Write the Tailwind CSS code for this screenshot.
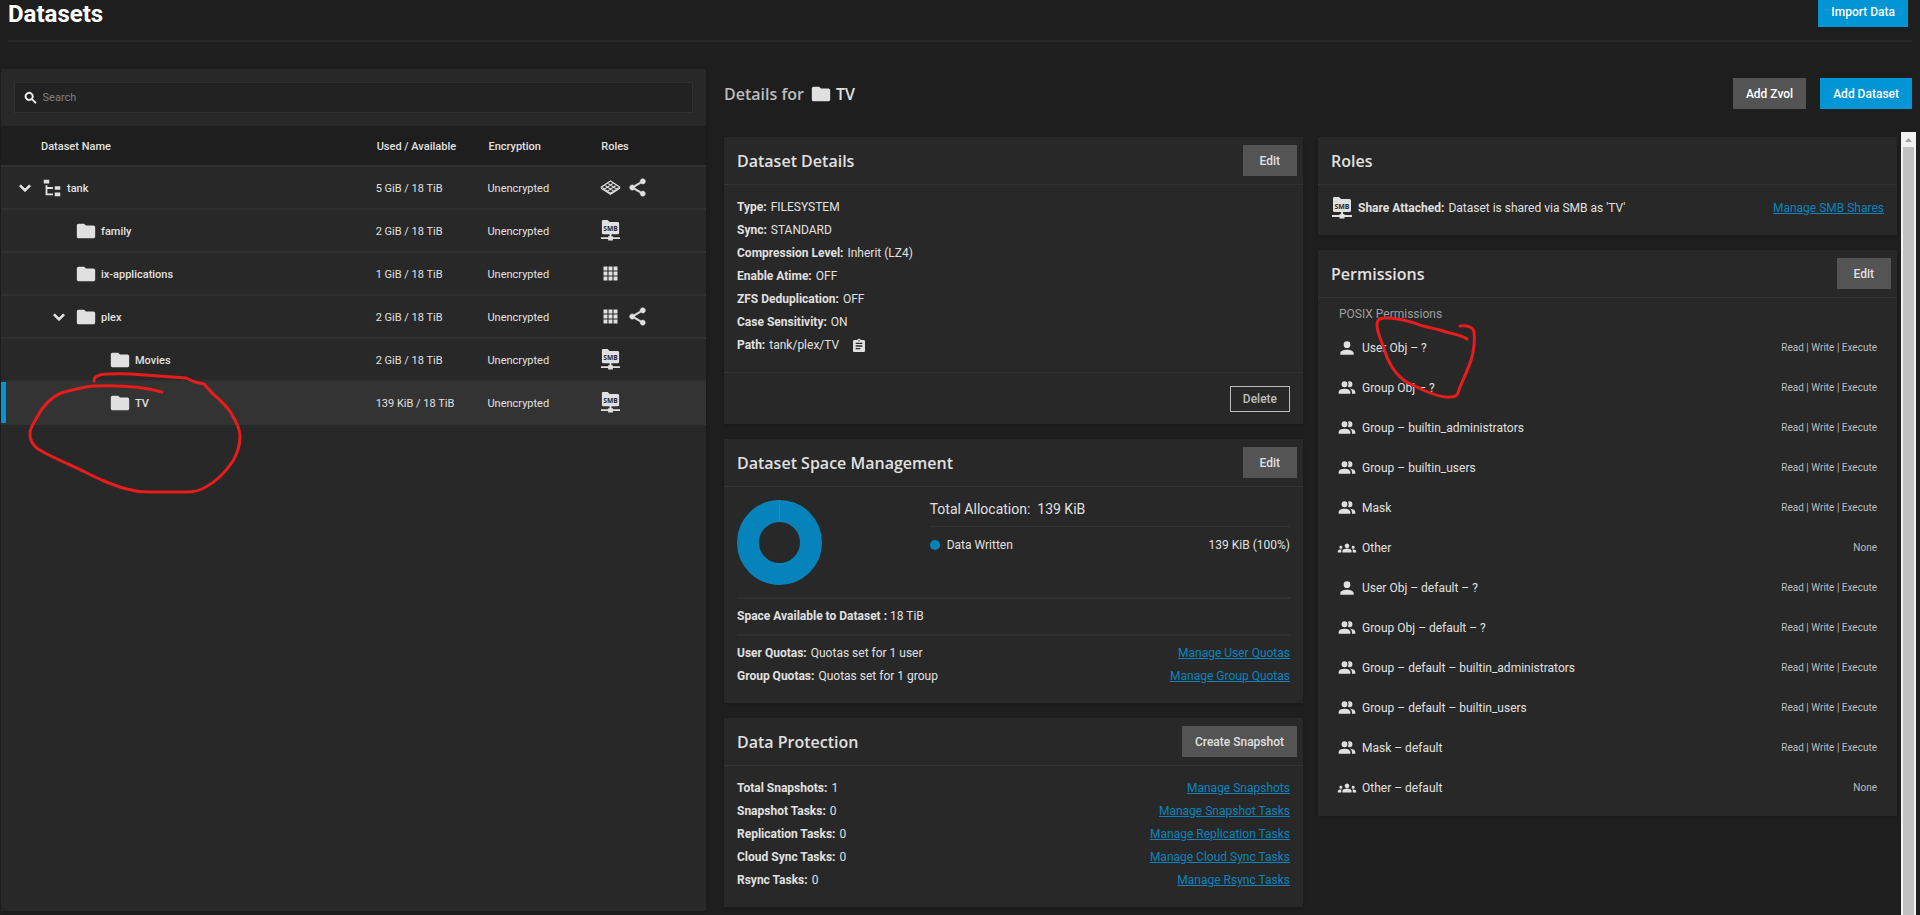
<!DOCTYPE html>
<html lang="en">
<head>
    <meta charset="UTF-8">
    <meta name="viewport" content="width=device-width, initial-scale=1.0">
    <title>Datasets</title>
    <script src="https://cdn.jsdelivr.net/npm/@tailwindcss/browser@4"></script>
</head>
<body class="relative flex min-h-screen flex-col overflow-x-hidden bg-[#1e1e1e] font-['Roboto',sans-serif] text-xs text-[#e0e0e0]">
    <!-- Icon sprite -->
    <svg class="hidden" aria-hidden="true">
        <symbol id="folder" viewBox="0 0 24 24"><path d="M10 4H4c-1.1 0-2 .9-2 2v12c0 1.1.9 2 2 2h16c1.1 0 2-.9 2-2V8c0-1.1-.9-2-2-2h-8z"/></symbol>
        <symbol id="tree" viewBox="0 0 24 24"><path d="M3 3H9V7H3V3M15 10H21V14H15V10M15 17H21V21H15V17M13 13H7V18H13V20H5V9H7V11H13V13Z"/></symbol>
        <symbol id="chevron" viewBox="0 0 24 24"><path d="M7.41 8.58L12 13.17L16.59 8.58L18 10L12 16L6 10Z" stroke="currentColor"/></symbol>
        <symbol id="apps" viewBox="0 0 24 24"><path d="M4 4h4.500v4.500H4zM9.750 4h4.500v4.500h-4.500zM15.500 4H20v4.500h-4.500zM4 9.750h4.500v4.500H4zM9.750 9.750h4.500v4.500h-4.500zM15.500 9.750H20v4.500h-4.500zM4 15.500h4.500V20H4zM9.750 15.500h4.500V20h-4.500zM15.500 15.500H20V20h-4.500z"/></symbol>
        <symbol id="share" viewBox="0 0 24 24"><path d="M18 16.080c-.76 0-1.440.3-1.960.77L8.910 12.700c.05-.23.09-.46.09-.7s-.04-.47-.09-.7l7.050-4.110c.54.5 1.250.81 2.040.81 1.660 0 3-1.340 3-3s-1.340-3-3-3-3 1.340-3 3c0 .24.04.47.09.7L8.040 9.810C7.500 9.310 6.790 9 6 9c-1.660 0-3 1.340-3 3s1.340 3 3 3c.79 0 1.500-.31 2.040-.81l7.120 4.160c-.05.21-.08.43-.08.65 0 1.610 1.310 2.920 2.920 2.920s2.920-1.310 2.920-2.920-1.310-2.920-2.920-2.920z" stroke="currentColor" stroke-width=".6"/></symbol>
        <symbol id="smb" viewBox="0 0 22 22">
            <path d="M3 0H8L10 2H18.500Q20 2 20 3.500V13.500Q20 15 18.500 15H12V17H13.500V18H21V20H13.500V21.500H8.500V20H1V18H8.500V17H10V15H3.500Q2 15 2 13.500V1.500Q2 0 3 0Z"/>
            <text x="11" y="11.500" text-anchor="middle" font-size="7" font-weight="700" fill="#282828" font-family="Open Sans, sans-serif">SMB</text>
        </symbol>
        <symbol id="pool" viewBox="0 0 24 18">
            <path d="M12 1.500L22.500 8.500L12 15.500L1.500 8.500ZM5 6.170L15.500 13.170M8.500 3.830L19 10.830M19 6.170L8.500 13.170M15.500 3.830L5 10.830" fill="none" stroke="currentColor" stroke-width="1.300"/>
            <path d="M1 9V10.500L12 17.500L23 10.500V9L12 15.500Z"/>
        </symbol>
        <symbol id="user" viewBox="0 0 24 24"><path d="M12 4A4 4 0 0 1 16 8A4 4 0 0 1 12 12A4 4 0 0 1 8 8A4 4 0 0 1 12 4M12 14C16.420 14 20 15.790 20 18V20H4V18C4 15.790 7.580 14 12 14Z"/></symbol>
        <symbol id="group" viewBox="0 0 24 24"><path d="M16 17V19H2V17S2 13 9 13 16 17 16 17M12.500 7.500A3.500 3.500 0 1 0 9 11A3.500 3.500 0 0 0 12.500 7.500M15.940 13A5.320 5.320 0 0 1 18 17V19H22V17S22 13.370 15.940 13M15 4A3.390 3.390 0 0 0 13.070 4.590A5 5 0 0 1 13.070 10.410A3.390 3.390 0 0 0 15 11A3.500 3.500 0 0 0 15 4Z"/></symbol>
        <symbol id="other" viewBox="-1 -1 26 26"><path d="M12 12.750c1.630 0 3.070.39 4.240.9 1.080.48 1.760 1.560 1.760 2.730V18H6v-1.610c0-1.180.68-2.260 1.760-2.730 1.170-.52 2.610-.91 4.240-.91zM4 13c1.100 0 2-.9 2-2s-.9-2-2-2-2 .9-2 2 .9 2 2 2zm1.130 1.100c-.37-.06-.74-.1-1.130-.1-.99 0-1.930.21-2.780.58C.48 14.900 0 15.620 0 16.430V18h4.500v-1.610c0-.83.23-1.610.63-2.290zM20 13c1.100 0 2-.9 2-2s-.9-2-2-2-2 .9-2 2 .9 2 2 2zm4 3.430c0-.81-.48-1.530-1.220-1.850-.85-.37-1.790-.58-2.780-.58-.39 0-.76.04-1.130.1.4.68.63 1.460.63 2.290V18H24v-1.570zM12 6c1.660 0 3 1.340 3 3s-1.340 3-3 3-3-1.340-3-3 1.340-3 3-3z"/></symbol>
        <symbol id="clipboard" viewBox="0 0 24 24"><path d="M19 3h-4.180C14.400 1.840 13.300 1 12 1s-2.400.84-2.820 2H5c-1.100 0-2 .9-2 2v14c0 1.100.9 2 2 2h14c1.100 0 2-.9 2-2V5c0-1.100-.9-2-2-2zm-7 0c.55 0 1 .45 1 1s-.45 1-1 1-1-.45-1-1 .45-1 1-1zm2 14H7v-2h7v2zm3-4H7v-2h10v2zm0-4H7V7h10v2z"/></symbol>
        <symbol id="search" viewBox="0 0 24 24"><path d="M15.500 14h-.79l-.28-.27C15.410 12.590 16 11.110 16 9.500 16 5.910 13.090 3 9.500 3S3 5.910 3 9.500 5.910 16 9.500 16c1.610 0 3.090-.59 4.230-1.570l.27.28v.79l5 4.990L20.490 19l-4.990-5zm-6 0C7.010 14 5 11.990 5 9.500S7.010 5 9.500 5 14 7.010 14 9.500 11.990 14 9.500 14z" stroke="currentColor"/></symbol>
    </svg>

    <!-- Page header -->
    <header class="mx-2 flex h-[42px] items-start justify-between border-b-2 border-[#282828] pr-1">
        <h1 class="text-2xl leading-7 font-bold text-white">Datasets</h1>
        <button class="h-[27px] bg-[#0095d5] px-[13px] pb-1 font-medium text-white">Import Data</button>
    </header>

    <main class="mt-[27px] grid grow grid-cols-[705fr_1196fr] gap-x-[18px] pl-px">
        <!-- Dataset tree -->
        <section class="mb-1 bg-[#282828] shadow">
            <div class="h-[57px] px-[13px] pt-[13px]">
                <label class="flex h-[31px] items-center gap-1 border border-[#303030] bg-[#222222] pl-2 text-white">
                    <svg class="size-4 fill-current"><use href="#search"/></svg>
                    <input type="text" aria-label="Search" placeholder="Search" class="w-full bg-transparent pt-[2px] text-[11px] outline-none placeholder:text-[#808080]">
                </label>
            </div>
            <table class="w-full table-fixed text-left text-[11px]">
                <colgroup><col class="w-[53%]"><col class="w-[16%]"><col class="w-[16%]"><col></colgroup>
                <thead class="bg-[#1e1e1e]">
                    <tr class="h-10 border-b-2 border-[#303030]">
                        <th class="pt-[3px] pl-10 font-medium">Dataset Name</th>
                        <th class="pt-[3px] pl-[2px] font-medium">Used / Available</th>
                        <th class="pt-[3px] pl-px font-medium">Encryption</th>
                        <th class="pt-[3px] pl-px font-medium">Roles</th>
                    </tr>
                </thead>
                <tbody id="rows"></tbody>
            </table>
        </section>

        <!-- Details panel -->
        <section class="flex flex-col">
            <div class="mt-[9px] flex h-[31px] items-center justify-between pr-2">
                <h2 class="flex items-center font-['Open_Sans',sans-serif] text-base font-semibold text-[#bdbdbd]">Details for <svg class="mr-1 ml-[6px] size-[22px] fill-[#e0e0e0]"><use href="#folder"/></svg><span class="text-[#e0e0e0]">TV</span></h2>
                <div class="flex gap-[14px] font-medium text-white">
                    <button class="h-[31px] bg-[#545454] px-[13px]">Add Zvol</button>
                    <button class="h-[31px] bg-[#0095d5] px-[13px]">Add Dataset</button>
                </div>
            </div>

            <div class="mt-[23px] flex grow pr-1">
                <div class="mt-[5px] grid grow grid-cols-2 items-start gap-[15px] pr-1">
                    <div class="flex flex-col gap-[15px]">
                        <article class="bg-[#282828] shadow">
                            <header class="flex h-12 items-center justify-between border-b border-[#333333] pr-[6px] pl-[13px]">
                                <h3 class="font-['Open_Sans',sans-serif] text-base font-semibold">Dataset Details</h3>
                                <button class="h-[31px] bg-[#545454] px-[17px] font-medium">Edit</button>
                            </header>
                            <dl class="px-[13px] pt-[11px] pb-[15px] leading-[23px]">
                                <div class="flex gap-1"><dt class="font-bold">Type:</dt><dd>FILESYSTEM</dd></div>
                                <div class="flex gap-1"><dt class="font-bold">Sync:</dt><dd>STANDARD</dd></div>
                                <div class="flex gap-1"><dt class="font-bold">Compression Level:</dt><dd>Inherit (LZ4)</dd></div>
                                <div class="flex gap-1"><dt class="font-bold">Enable Atime:</dt><dd>OFF</dd></div>
                                <div class="flex gap-1"><dt class="font-bold">ZFS Deduplication:</dt><dd>OFF</dd></div>
                                <div class="flex gap-1"><dt class="font-bold">Case Sensitivity:</dt><dd>ON</dd></div>
                                <div class="flex gap-1"><dt class="font-bold">Path:</dt><dd class="flex items-center gap-3">tank/plex/TV <button aria-label="Copy path"><svg class="size-4 fill-current"><use href="#clipboard"/></svg></button></dd></div>
                            </dl>
                            <footer class="flex h-[52px] items-center justify-end border-t border-[#333333] pr-[13px]">
                                <button class="h-[26px] border border-[#bdbdbd] px-3 font-medium text-[#bdbdbd]">Delete</button>
                            </footer>
                        </article>

                        <article class="bg-[#282828] shadow">
                            <header class="flex h-12 items-center justify-between border-b border-[#333333] pr-[6px] pl-[13px]">
                                <h3 class="font-['Open_Sans',sans-serif] text-base font-semibold">Dataset Space Management</h3>
                                <button class="h-[31px] bg-[#545454] px-[17px] font-medium">Edit</button>
                            </header>
                            <div class="px-[13px] pb-[15px]">
                                <div class="grid h-[112px] grid-cols-[193fr_361fr] border-b-2 border-[#303030] pt-[13px]">
                                    <svg class="size-[85px]" viewBox="0 0 85 85" role="img" aria-label="Space usage">
                                        <circle cx="42.5" cy="42.5" r="31.5" fill="none" stroke="#0683bb" stroke-width="22"/>
                                        <path d="M42.500 0V22" stroke="#0a90cc"/>
                                    </svg>
                                    <div>
                                        <p class="h-[27px] border-b border-[#333333] text-sm leading-[18px]">Total Allocation:&nbsp; 139 KiB</p>
                                        <p class="flex h-9 items-center gap-[7px]"><span class="size-[10px] rounded-full bg-[#0683bb]"></span>Data Written<span class="ml-auto">139 KiB (100%)</span></p>
                                    </div>
                                </div>
                                <p class="h-[37px] border-b-2 border-[#303030] leading-[35px]"><b>Space Available to Dataset :</b> 18 TiB</p>
                                <div class="pt-[6px] leading-[23px]">
                                    <p class="flex gap-1"><b>User Quotas:</b> Quotas set for 1 user <a href="#" class="ml-auto text-[#0a84bd] underline">Manage User Quotas</a></p>
                                    <p class="flex gap-1"><b>Group Quotas:</b> Quotas set for 1 group <a href="#" class="ml-auto text-[#0a84bd] underline">Manage Group Quotas</a></p>
                                </div>
                            </div>
                        </article>

                        <article class="bg-[#282828] shadow">
                            <header class="flex h-12 items-center justify-between border-b border-[#333333] pr-[6px] pl-[13px]">
                                <h3 class="font-['Open_Sans',sans-serif] text-base font-semibold">Data Protection</h3>
                                <button class="h-[31px] bg-[#545454] px-[13px] font-medium">Create Snapshot</button>
                            </header>
                            <div class="px-[13px] pt-[11px] pb-[15px] leading-[23px]">
                                <p class="flex gap-1"><b>Total Snapshots:</b> 1 <a href="#" class="ml-auto text-[#0a84bd] underline">Manage Snapshots</a></p>
                                <p class="flex gap-1"><b>Snapshot Tasks:</b> 0 <a href="#" class="ml-auto text-[#0a84bd] underline">Manage Snapshot Tasks</a></p>
                                <p class="flex gap-1"><b>Replication Tasks:</b> 0 <a href="#" class="ml-auto text-[#0a84bd] underline">Manage Replication Tasks</a></p>
                                <p class="flex gap-1"><b>Cloud Sync Tasks:</b> 0 <a href="#" class="ml-auto text-[#0a84bd] underline">Manage Cloud Sync Tasks</a></p>
                                <p class="flex gap-1"><b>Rsync Tasks:</b> 0 <a href="#" class="ml-auto text-[#0a84bd] underline">Manage Rsync Tasks</a></p>
                            </div>
                        </article>
                    </div>

                    <div class="flex flex-col gap-[15px]">
                        <article class="bg-[#282828] shadow">
                            <header class="flex h-12 items-center border-b border-[#333333] pl-[13px]">
                                <h3 class="font-['Open_Sans',sans-serif] text-base font-semibold">Roles</h3>
                            </header>
                            <p class="flex h-[50px] items-center gap-1 px-[13px] pb-1"><svg class="mr-px size-[22px] fill-current"><use href="#smb"/></svg><b>Share Attached:</b> Dataset is shared via SMB as 'TV' <a href="#" class="ml-auto text-[#0a84bd] underline">Manage SMB Shares</a></p>
                        </article>

                        <article class="bg-[#282828] pb-2 shadow">
                            <header class="flex h-12 items-center justify-between border-b border-[#333333] pr-[6px] pl-[13px]">
                                <h3 class="font-['Open_Sans',sans-serif] text-base font-semibold">Permissions</h3>
                                <button class="h-[31px] bg-[#545454] px-[17px] font-medium">Edit</button>
                            </header>
                            <h4 class="h-[30px] px-[21px] pt-2 text-[#9e9e9e]">POSIX Permissions</h4>
                            <ul id="permissions" class="pr-5 pl-[19px]"></ul>
                        </article>
                    </div>
                </div>

                <!-- Scrollbar -->
                <div class="flex w-[15px] flex-col items-center bg-[#f1f1f1]" aria-hidden="true">
                    <svg class="h-[15px] w-[15px]" viewBox="0 0 15 15"><path d="M4 10L7.500 6L11 10Z" fill="#a3a3a3"/></svg>
                    <div class="w-[11px] grow bg-[#c1c1c1]"></div>
                </div>
            </div>
        </section>
    </main>

    <!-- Pen marks over the page -->
    <svg class="pointer-events-none absolute top-0 left-0 h-[915px] w-[1920px]" viewBox="0 0 1920 915" fill="none" stroke="#e81c1c" stroke-width="3" stroke-linecap="round" stroke-linejoin="round" aria-hidden="true">
        <path d="M94 381C94 376 99 374 109 374C122 373 134 374 145 375C160 376 173 377 186 378L195 382L204 384L212 393C219 399 226 405 231 413C236 421 240 428 240 436C240 445 237 454 233 461C225 473 216 482 204 488C200 490 194 492 188 492H148C132 492 119 487 104 481C92 476 80 469 68 464C57 459 46 454 38 449C33 445 30 440 30 435C29 429 34 423 37 417C42 408 49 398 61 393C72 390 83 387 93 386C117 385 141 386 162 392"/>
        <path d="M1460 326C1468 325 1474 328 1474 332C1475 341 1474 349 1472 357C1468 371 1461 383 1458 393C1457 396 1455 397 1450 397C1442 398 1432 394 1423 390C1416 386 1411 385 1405 381C1395 374 1387 361 1384 348C1380 338 1377 332 1377 325C1377 320 1379 318 1386 318C1395 318 1404 320 1411 322C1416 323 1419 325 1423 326C1431 328 1439 329 1446 332C1454 334 1462 335 1467 339"/>
    </svg>

    <script>
        const datasets = [
            { name: 'tank', used: '5 GiB / 18 TiB', level: 0, open: true, icon: 'tree', roles: ['pool', 'share'] },
            { name: 'family', used: '2 GiB / 18 TiB', level: 1, icon: 'folder', roles: ['smb'] },
            { name: 'ix-applications', used: '1 GiB / 18 TiB', level: 1, icon: 'folder', roles: ['apps'] },
            { name: 'plex', used: '2 GiB / 18 TiB', level: 1, open: true, icon: 'folder', roles: ['apps', 'share'] },
            { name: 'Movies', used: '2 GiB / 18 TiB', level: 2, icon: 'folder', roles: ['smb'] },
            { name: 'TV', used: '139 KiB / 18 TiB', level: 2, icon: 'folder', roles: ['smb'], selected: true }
        ];
        const indent = ['pl-[13px]', 'pl-[47px]', 'pl-[81px]'];

        document.getElementById('rows').innerHTML = datasets.map(d => `
            <tr class="h-[43px] border-b-2 ${d.selected ? 'border-[#333333] bg-[#333333] shadow-[inset_5px_0_0_#0095d5]' : 'border-[#303030]'}">
                <td class="${indent[d.level]}">
                    <div class="flex items-center font-medium">
                        ${d.open
                            ? '<button aria-label="Collapse"><svg class="size-[22px] fill-current"><use href="#chevron"/></svg></button>'
                            : '<span class="w-[22px]"></span>'}
                        <svg class="mr-1 ml-[5px] size-[22px] fill-current"><use href="#${d.icon}"/></svg><span class="pt-[3px]">${d.name}</span>
                    </div>
                </td>
                <td class="pt-[3px] pl-px">${d.used}</td>
                <td class="pt-[3px]">Unencrypted</td>
                <td><div class="flex items-center gap-[6px]">${d.roles.map(r => `<svg class="size-[21px] fill-current"><use href="#${r}"/></svg>`).join('')}</div></td>
            </tr>`).join('');

        const rwx = 'Read | Write | Execute';
        const permissions = [
            ['user', 'User Obj – ?', rwx],
            ['group', 'Group Obj – ?', rwx],
            ['group', 'Group – builtin_administrators', rwx],
            ['group', 'Group – builtin_users', rwx],
            ['group', 'Mask', rwx],
            ['other', 'Other', 'None'],
            ['user', 'User Obj – default – ?', rwx],
            ['group', 'Group Obj – default – ?', rwx],
            ['group', 'Group – default – builtin_administrators', rwx],
            ['group', 'Group – default – builtin_users', rwx],
            ['group', 'Mask – default', rwx],
            ['other', 'Other – default', 'None']
        ];

        document.getElementById('permissions').innerHTML = permissions.map(([icon, name, access]) => `
            <li class="flex h-10 items-center gap-[5px]">
                <svg class="size-5 fill-current"><use href="#${icon}"/></svg>
                <span>${name}</span>
                <span class="ml-auto text-[10px] text-[#bdbdbd]">${access}</span>
            </li>`).join('');
    </script>
</body>
</html>
